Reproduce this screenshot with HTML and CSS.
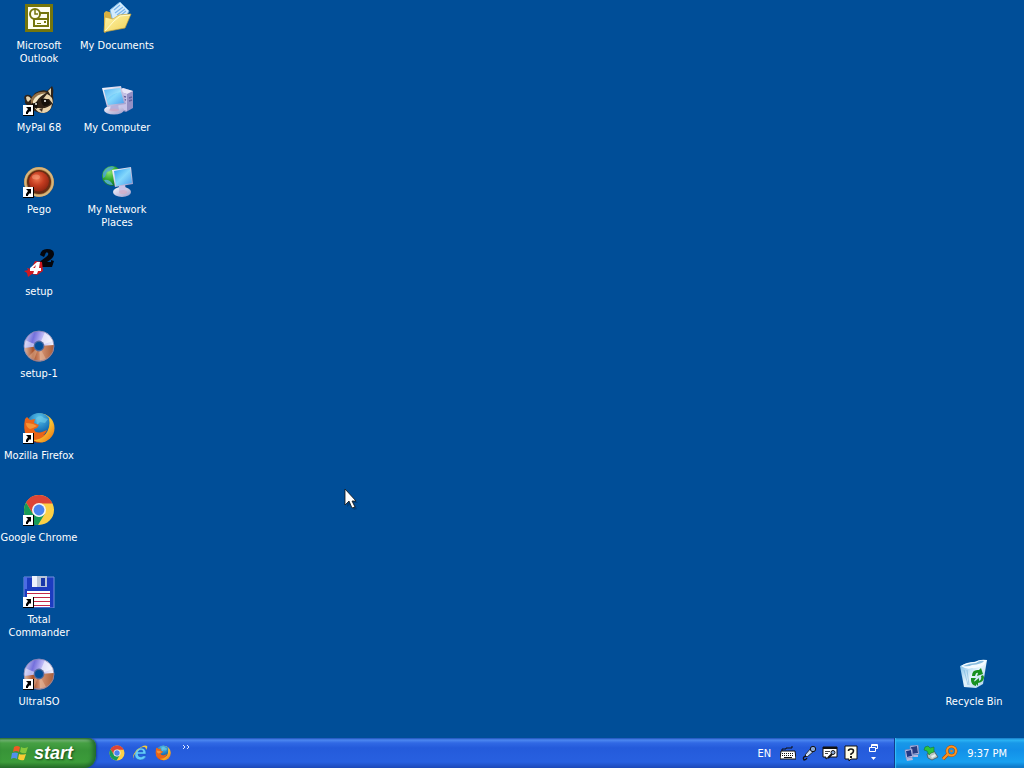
FILE: index.html
```html
<!DOCTYPE html>
<html lang="en">
<head>
<meta charset="utf-8">
<title>Desktop</title>
<link rel="stylesheet" href="styles.css">
</head>
<body>
<svg class="defs" width="0" height="0" aria-hidden="true">
  <defs>
    <linearGradient id="discTop" x1="0" y1="0" x2="1" y2="0.3"><stop offset="0" stop-color="#d8dcf4"/><stop offset=".35" stop-color="#7470dc"/><stop offset=".6" stop-color="#b9b4f4"/><stop offset="1" stop-color="#eef0fc"/></linearGradient>
    <linearGradient id="discLow" x1="0" y1="0" x2="1" y2="0"><stop offset="0" stop-color="#e2c0ac"/><stop offset=".3" stop-color="#a8532c"/><stop offset=".55" stop-color="#d69474"/><stop offset="1" stop-color="#a65c38"/></linearGradient>
    <linearGradient id="screen" x1="0" y1="0" x2="1" y2="1"><stop offset="0" stop-color="#2c9cf0"/><stop offset=".5" stop-color="#84d8fc"/><stop offset="1" stop-color="#4a9cec"/></linearGradient>
    <linearGradient id="plastic" x1="0" y1="0" x2="1" y2="1"><stop offset="0" stop-color="#fafaff"/><stop offset="1" stop-color="#9c98c8"/></linearGradient>
    <linearGradient id="folder" x1="0" y1="0" x2="1" y2="1"><stop offset="0" stop-color="#fff6a8"/><stop offset="1" stop-color="#f0d058"/></linearGradient>
    <radialGradient id="redBall" cx=".4" cy=".35" r=".7"><stop offset="0" stop-color="#f07850"/><stop offset=".5" stop-color="#c43c20"/><stop offset="1" stop-color="#8c2410"/></radialGradient>
    <radialGradient id="globe" cx=".35" cy=".3" r=".8"><stop offset="0" stop-color="#90e870"/><stop offset=".5" stop-color="#30a830"/><stop offset="1" stop-color="#0c6030"/></radialGradient>
    <linearGradient id="foxTail" x1="0" y1="0" x2="1" y2="1"><stop offset="0" stop-color="#f8e860"/><stop offset=".55" stop-color="#fbc030"/><stop offset="1" stop-color="#e86c10"/></linearGradient>
    <radialGradient id="foxGlobe" cx=".5" cy=".2" r=".8"><stop offset="0" stop-color="#58c4ec"/><stop offset=".6" stop-color="#1c78bc"/><stop offset="1" stop-color="#123c80"/></radialGradient>
    <linearGradient id="bin" x1="0" y1="0" x2="1" y2="1"><stop offset="0" stop-color="#6cb4e4"/><stop offset=".5" stop-color="#e4f4fc"/><stop offset="1" stop-color="#a8cce8"/></linearGradient>

    <symbol id="arrow" viewBox="0 0 11 11">
      <path d="M0 0h11v11H0z" fill="#000"/><path d="M0 0h10v10H0z" fill="#fff"/>
      <path d="M3 2h5v5L7 6 5 8v1H3V7l2-3z" fill="#000"/>
    </symbol>
    <symbol id="disc" viewBox="0 0 32 32">
      <circle cx="16" cy="16" r="15" fill="url(#discTop)"/>
      <path d="M1 18L16 16l15-1A15 15 0 0 1 1 18z" fill="url(#discLow)"/>
      <path d="M16 16L5 27a15 15 0 0 0 6 3z" fill="#e4b494" opacity=".5"/>
      <path d="M16 16L17 31a15 15 0 0 0 6-2z" fill="#eac0a4" opacity=".5"/>
      <path d="M16 16L22 2a15 15 0 0 1 8 9z" fill="#fff" opacity=".55"/>
      <path d="M16 16L2 10Q1 13 1 18z" fill="#fff" opacity=".5"/>
      <circle cx="16" cy="16" r="15" fill="none" stroke="#8c88b0" stroke-width=".8"/>
      <circle cx="16" cy="16" r="5.4" fill="#50699c"/><circle cx="16" cy="16" r="4" fill="#004e98"/>
    </symbol>
    <symbol id="chrome" viewBox="0 0 32 32">
      <circle cx="16" cy="16" r="15" fill="#fcd046"/>
      <path d="M3 8.5A15 15 0 0 1 29.5 9.5H16L9.7 19.5z" fill="#dc4437"/>
      <path d="M3 8.5A15 15 0 0 0 15 31L22 19.5 16 23 9.7 19.5z" fill="#169b58"/>
      <circle cx="16" cy="16" r="7" fill="#f4f4f4"/><circle cx="16" cy="16" r="5.4" fill="#4a84ee"/>
    </symbol>
    <symbol id="firefox" viewBox="0 0 32 32">
      <circle cx="17" cy="16" r="14.5" fill="url(#foxTail)"/>
      <circle cx="16" cy="13.5" r="12.5" fill="url(#foxGlobe)"/>
      <path d="M13 6q5-4 8 0l4 1-3 4-5-1-3 3z" fill="#70cce8" opacity=".6"/>
      <path d="M2 7l2-2 3 3 5-1-1 4 5 2-2 3-3 1q1 5 8 3l5-2q-2 5-6 6l10-4q-4 9-14 9-8 0-11-6Q0 17 2 7z" fill="#ea6418"/>
      <path d="M3 11q3 0 7 1l4 2-4 2-3 1q-4-2-4-6z" fill="#f69436"/>
      <path d="M26 6q6 6 4 13-2 8-9 11-7 1-12-2 9 0 13-5 6-7 4-17z" fill="url(#foxTail)"/>
      <path d="M4 23q6 8 15 7-9 3-15-7z" fill="#b83008"/>
    </symbol>
    <symbol id="monitor" viewBox="0 0 26 29">
      <ellipse cx="13" cy="24" rx="10" ry="4.5" fill="url(#plastic)"/>
      <path d="M10 17h7l1 7q-5 2-9 0z" fill="#b4b0dc"/>
      <path d="M1 2l19-2 5 18-19 3z" fill="url(#plastic)"/>
      <path d="M3 4l16-2 4 15-16 2z" fill="url(#screen)"/>
      <path d="M3 4l16-2 1 4Q11 7 6 14z" fill="#d8f6ff" opacity=".25"/>
      <ellipse cx="13" cy="24" rx="5" ry="1.6" fill="#d8a4b8" opacity=".55"/>
    </symbol>
    <symbol id="monitorRight" viewBox="0 0 22 31">
      <ellipse cx="11" cy="26" rx="9" ry="5" fill="url(#plastic)"/>
      <path d="M8 18h6l1 8q-4 2-7 0z" fill="#c8c4e8"/>
      <path d="M1 4L20 1l2 17-18 3z" fill="url(#plastic)"/>
      <path d="M3 5l16-3 2 15-16 3z" fill="url(#screen)"/>
      <ellipse cx="12" cy="26" rx="4" ry="2" fill="#d8a4b8" opacity=".55"/>
    </symbol>
  </defs>
</svg>

<main class="desktop">
  <button class="shortcut">
    <svg class="icon" viewBox="0 0 32 32"><path d="M2 2h28v28H2z" fill="#75760c"/><path d="M5 5h22v22H5z" fill="#fffff0"/><path d="M15 11h10v13H11v-5" fill="none" stroke="#75760c" stroke-width="2"/><circle cx="12" cy="12" r="5" fill="#fffff0" stroke="#75760c" stroke-width="2"/><path d="M12 8v4h3" fill="none" stroke="#75760c" stroke-width="1.500"/><path d="M11 17h14v7H11z" fill="#fffff0" stroke="#75760c" stroke-width="2"/><path d="M21 19h2v2h-2zM14 21h4v1h-4z" fill="#75760c"/></svg>
    <span class="label">Microsoft Outlook</span>
  </button>
  <button class="shortcut">
    <svg class="icon" viewBox="0 0 32 32"><path d="M3 11l2-2 7 2 2 9-10 11-1-1z" fill="#d8b040"/><path d="M9 8L19 0l9 9-7 13-9-2z" fill="#d4ebfc" stroke="#78b4e0"/><path d="M13 8l6-5M14 11l8-6M16 13l8-6M18 15l7-6" stroke="#78b4ec" stroke-width="1.200"/><path d="M3 30l1-15 8 2 6-4 12-1-6 14z" fill="url(#folder)" stroke="#c8a43c" stroke-width=".7"/><path d="M4 29l9-10 6-5 10-1" fill="none" stroke="#fffbd0"/></svg>
    <span class="label">My Documents</span>
  </button>
  <button class="shortcut">
    <svg class="icon" viewBox="0 0 32 32"><path d="M2 16Q0 13 3 11q4-1 6 2l3-4q7-4 12-2l5-5q2 3 1 9 1 8-1 12-3 6-9 6-10 0-13-8-6 1-5-5z" fill="#302318"/><path d="M3 13q3-2 5 2l-3 3q-2-2-2-5zM25 7l3-3v8z" fill="#e4d4b0"/><path d="M11 11q5-4 13-3l-8 4-5 6-3 2q-1-6 3-9z" fill="#92714a"/><path d="M10 17q3-7 13-8-7 4-9 8l-4 5z" fill="#f2e4c2"/><path d="M24 10q6 2 6 10l-4-5-6 0zM17 24q7 1 12-4-1 8-8 9-7 0-9-5z" fill="#ead5ae"/><path d="M18 15q5-2 9 3 0 4-6 4-3-2-3-7zM8 20l7-2-1 7z" fill="#15100b"/><circle cx="22" cy="17" r="1" fill="#fff"/><circle cx="13" cy="20" r="1" fill="#eee"/><path d="M16 25l4-1-1 4z" fill="#403025"/><use href="#arrow" y="21" width="11" height="11"/></svg>
    <span class="label">MyPal 68</span>
  </button>
  <button class="shortcut">
    <svg class="icon" viewBox="0 0 32 32"><path d="M17 7l5-3 10 3v17l-7 4-8-3z" fill="#9490c4"/><path d="M17 7l5-3 10 3-6 3z" fill="#e8e6f8"/><path d="M17 7l9 3v17l-9-3z" fill="#c8c4e8"/><path d="M20 12l5 1M20 15l5 1M28 14l3-1M28 17l3-1" stroke="#64609c" stroke-width="1.500"/><use href="#monitor" x="0" y="2" width="26" height="29"/></svg>
    <span class="label">My Computer</span>
  </button>
  <button class="shortcut">
    <svg class="icon" viewBox="0 0 32 32"><circle cx="16" cy="16" r="15" fill="#b08848"/><circle cx="16" cy="16" r="13.700" fill="none" stroke="#d8b47c" stroke-width="2"/><circle cx="16" cy="16" r="12" fill="#682c14"/><circle cx="16" cy="15.500" r="10" fill="url(#redBall)"/><ellipse cx="13" cy="11" rx="4" ry="2.500" fill="#ffb08c" opacity=".45"/><use href="#arrow" y="21" width="11" height="11"/></svg>
    <span class="label">Pego</span>
  </button>
  <button class="shortcut">
    <svg class="icon" viewBox="0 0 32 32"><circle cx="11" cy="10" r="10" fill="url(#globe)"/><path d="M2 7q5-8 12-6l-5 4-3 1-2 5-2 1z" fill="#4ca0e8" opacity=".75"/><path d="M3 14q6-1 9 5-7 0-9-5z" fill="#5cb0e8" opacity=".8"/><use href="#monitorRight" x="10" y="0" width="22" height="31"/></svg>
    <span class="label">My Network Places</span>
  </button>
  <button class="shortcut">
    <svg class="icon" viewBox="0 0 32 32"><path d="M17 7q1-6 7-6 7 0 7 5 0 4-7 8h4v-2l3 1-2 6H15v-4l8-6q3-2 2-4-2-2-3 2l-1 2z" fill="#05060c"/><path d="M4 20l4 1 4-8 7 1 1 9-6 4-5-1-4 3-1-4-3-2 4-1z" fill="#d01820"/><path d="M14 14h3l-1 6h2v3h-3l-1 3h-4l1-3H7v-3zM13 17l-3 3h2z" fill="#fff" fill-rule="evenodd"/></svg>
    <span class="label">setup</span>
  </button>
  <button class="shortcut">
    <svg class="icon" viewBox="0 0 32 32"><use href="#disc" width="32" height="32"/></svg>
    <span class="label">setup-1</span>
  </button>
  <button class="shortcut">
    <svg class="icon" viewBox="0 0 32 32"><use href="#firefox" width="32" height="32"/><use href="#arrow" y="21" width="11" height="11"/></svg>
    <span class="label">Mozilla Firefox</span>
  </button>
  <button class="shortcut">
    <svg class="icon" viewBox="0 0 32 32"><use href="#chrome" width="32" height="32"/><use href="#arrow" y="21" width="11" height="11"/></svg>
    <span class="label">Google Chrome</span>
  </button>
  <button class="shortcut">
    <svg class="icon" viewBox="0 0 32 32"><path d="M1 1h30v31H2l-1-2z" fill="#1c3cc0" stroke="#7490dc"/><path d="M1 1h3v12H1z" fill="#4c6ce4"/><path d="M9 0h15v11H9z" fill="#b8c4d8"/><path d="M9 0h5v11H9z" fill="#eef2fc"/><path d="M18 2h4v8h-4z" fill="#1838a8"/><path d="M4 15h23v16H4z" fill="#fff"/><path d="M4 17h23v1H4zM4 21h23v1H4zM4 25h23v1H4zM4 29h23v1H4z" fill="#c42848"/><use href="#arrow" y="21" width="11" height="11"/></svg>
    <span class="label">Total Commander</span>
  </button>
  <button class="shortcut">
    <svg class="icon" viewBox="0 0 32 32"><use href="#disc" width="32" height="32"/><use href="#arrow" y="21" width="11" height="11"/></svg>
    <span class="label">UltraISO</span>
  </button>
  <button class="shortcut recycle">
    <svg class="icon" viewBox="0 0 32 32"><path d="M2 8q7-3 13-4l14-2-4 24-7 4-12-1z" fill="url(#bin)"/><path d="M3 8q5-4 14-4 4-3 12-2l-3 5q-6 4-12 3-5 2-11-2z" fill="#f4fbff"/><path d="M5 8q7-3 13-3 4-3 8-2-2 3-12 4-3 2-9 1z" fill="#88bcdf"/><path d="M6 12l4 15M9 12l2 15" stroke="#69add8" opacity=".5"/><g fill="#189020"><path d="M14 18q0-7 7-6l2-2 2 6-6 2 1-3q-2-1-3 3z"/><path d="M25 17l1 2q0 5-6 6v3l-4-4 5-4v3q3-1 2-5z"/><path d="M13 20l5 0-2 3 2 2v3q-5-1-5-6z"/></g></svg>
    <span class="label">Recycle Bin</span>
  </button>
</main>

<footer class="taskbar">
  <button class="start">
    <svg class="flag" viewBox="0 0 18 18"><path d="M3 3q3-2 6 0L8 8Q5 6 2 8z" fill="#ee5a24"/><path d="M10 3q3 2 7 0l-2 6q-3 1-6-1z" fill="#84c83c"/><path d="M1 9q3-1 6 0l-1 6q-3-2-6 0z" fill="#5090ec"/><path d="M8 10q3 1 7 0l-2 6q-3 1-6-1z" fill="#f8cc34"/></svg>
    <span>start</span>
  </button>
  <nav class="quick" aria-label="Quick launch">
    <button class="tool" aria-label="Google Chrome"><svg viewBox="0 0 32 32"><use href="#chrome" width="32" height="32"/></svg></button>
    <button class="tool" aria-label="Internet Explorer"><svg viewBox="0 0 16 16"><path d="M14 11q-1 4-6 4-6-1-5-7 1-5 6-5 5 0 5 6H6q0 3 3 3 1 0 2-1zM6 7h5q0-2-2-2T6 7z" fill="#64ccfc" stroke="#1458b0" stroke-width=".4" fill-rule="evenodd"/><path d="M2 15Q-1 11 5 5q7-6 10-4 1 1-1 4 0-3-2-3-4 0-8 5-4 6-2 8z" fill="#f4cc38"/></svg></button>
    <button class="tool" aria-label="Mozilla Firefox"><svg viewBox="0 0 32 32"><use href="#firefox" width="32" height="32"/></svg></button>
    <button class="more" aria-label="More programs"><svg viewBox="0 0 8 7"><path d="M1 1l2 2-2 2M5 1l2 2-2 2" fill="none" stroke="#dceaff"/></svg></button>
  </nav>
  <div class="language">
    <button class="lang">EN</button>
    <button class="tool" aria-label="Keyboard"><svg viewBox="0 0 16 16"><path d="M2 6V4h4V3h6V1" fill="none" stroke="#111"/><path d="M1 6h14l1 8H0z" fill="#fff" stroke="#111"/><path d="M2 8.500h12M2 10.500h12" stroke="#111" stroke-dasharray="1 1"/><path d="M4 12.500h8" stroke="#111"/></svg></button>
    <button class="tool" aria-label="Microphone"><svg viewBox="0 0 16 16"><path d="M4 10l6-7 3 3-7 6z" fill="#c8dcf4" stroke="#111" stroke-width=".8"/><circle cx="12" cy="4" r="2.700" fill="#88a8d8" stroke="#111"/><path d="M5 11q-4 1-2 4 2 0 3-2" fill="none" stroke="#111" stroke-width="1.300"/></svg></button>
    <button class="tool" aria-label="Writing tools"><svg viewBox="0 0 16 16"><path d="M1 2h14v10H7l-3 2v-2H1z" fill="#fff" stroke="#111"/><path d="M1 2h14v2H1z" fill="#111"/><path d="M3 6.500h5M3 8.500h3" stroke="#444"/><path d="M6 13l4-4" stroke="#111" stroke-width="2"/><circle cx="11" cy="7.500" r="2" fill="#8caad8" stroke="#111"/></svg></button>
    <button class="tool" aria-label="Help"><svg viewBox="0 0 16 16"><path d="M2 1h12v13H8l-2 2v-2H2z" fill="#fffde8" stroke="#111"/><path d="M5.500 6q0-2 2.500-2t2.500 2-2.500 3v1" fill="none" stroke="#111" stroke-width="1.600"/><path d="M7 11h2v2H7z" fill="#111"/></svg></button>
    <div class="langmenu">
      <button aria-label="Restore"><svg viewBox="0 0 9 8"><path d="M2.500 3.500v-3h6v4h-2M.500 3.500h6v4h-6zM2.500 1.500h6" fill="none" stroke="#fff"/></svg></button>
      <button aria-label="Options"><svg viewBox="0 0 9 8"><path d="M2 3h5L4.500 6z" fill="#fff"/></svg></button>
    </div>
  </div>
  <div class="tray">
    <button class="tool" aria-label="Network connection"><svg viewBox="0 0 16 16"><path d="M6 1l8-1 1 9-8 1z" fill="#c8d0f0" stroke="#7880b8" stroke-width=".7"/><path d="M7 2l6-1 1 7-6 1z" fill="#283c80"/><path d="M9 10h5v2H9zM2 13l6-1 1 3-6 1z" fill="#b4b8dc"/><path d="M1 5l7-1 1 8-7 1z" fill="#d8def8" stroke="#7880b8" stroke-width=".7"/><path d="M2 6l5-1 1 6-5 1z" fill="#203884"/></svg></button>
    <button class="tool" aria-label="Safely remove hardware"><svg viewBox="0 0 16 16"><path d="M4 9l7-3 4 6-6 3-4-2z" fill="#b8c4c0" stroke="#46555c" stroke-width=".8"/><path d="M8 11l4-2 1 2-4 2z" fill="#e8f0f0"/><path d="M2 2l3-1 2 2 4-1v5l-3 1-2 2-2-4-3-1z" fill="#2cc43c" stroke="#177438" stroke-width=".6"/></svg></button>
    <button class="tool" aria-label="Search"><svg viewBox="0 0 16 16"><circle cx="9.500" cy="6" r="4.500" fill="none" stroke="#a64c08" stroke-width="3"/><path d="M6 9l-5 5" stroke="#a64c08" stroke-width="3.500"/><circle cx="9.500" cy="6" r="4.500" fill="none" stroke="#fc9420" stroke-width="2"/><path d="M6 9l-5 5" stroke="#fc9420" stroke-width="2.300"/><circle cx="9.500" cy="6" r="1.300" fill="#e87c14"/></svg></button>
    <time class="clock">9:37 PM</time>
  </div>
</footer>

<svg class="pointer" viewBox="0 0 14 22" aria-hidden="true"><path d="M3 4v15l4-3 3 6 3-1-3-6h4z" fill="#003468" opacity=".6"/><path d="M1 1v16l4-4 3 7 3-1-3-6h4z" fill="#fff" stroke="#111" stroke-width=".8"/></svg>
</body>
</html>
```
FILE: styles.css
```css
* { box-sizing: border-box; }

body {
  margin: 0;
  min-height: 100vh;
  display: grid;
  grid-template-rows: 1fr auto;
  background: #004e98;
  color: #fff;
  font: 11px/13px Tahoma, "DejaVu Sans Condensed", sans-serif;
  overflow: hidden;
}

button {
  padding: 0;
  border: 0;
  background: none;
  color: inherit;
  font: inherit;
}

svg { display: block; }

.defs { position: absolute; }

.desktop {
  display: grid;
  grid-template-columns: 78px 78px 1fr 100px;
  grid-template-rows: repeat(9, 82px);
}

.shortcut {
  grid-column: 1;
  display: flex;
  flex-direction: column;
  align-items: center;
  gap: 5px;
  padding-top: 2px;
}

/* The system folders fill the second column from the top. */
.shortcut:nth-child(-n+6):nth-child(even) { grid-column: 2; }

.recycle { grid-column: 4; grid-row: 9; }

.icon { width: 32px; height: 32px; }

.label { text-align: center; }

.taskbar {
  display: flex;
  height: 30px;
  background: linear-gradient(#1c50b8 0, #4c88f0 2px, #3068e4 5px, #245bdb 10px, #2860e0 24px, #1c48b8 30px);
}

.start {
  display: flex;
  align-items: center;
  gap: 5px;
  width: 96px;
  padding-left: 11px;
  border-radius: 0 8px 12px 0;
  background: linear-gradient(#307430 0, #78b878 2px, #46a044 5px, #389438 12px, #3c9c3a 24px, #287028 30px);
  box-shadow: inset -3px 0 4px #20682c, 1px 0 2px #1840a0;
  font: italic bold 18px/20px "Liberation Sans", Arial, sans-serif;
  text-shadow: 1px 1px 2px #184818;
}

.flag { width: 18px; height: 18px; }

.quick {
  display: flex;
  align-items: center;
  gap: 7px;
  padding-left: 13px;
}

.tool svg { width: 16px; height: 16px; }

.more {
  align-self: start;
  padding: 6px 0 0 4px;
}

.more svg { width: 8px; height: 7px; }

.language {
  display: flex;
  align-items: center;
  gap: 5px;
  margin-left: auto;
  padding-right: 16px;
}

.lang { padding-right: 4px; }

.langmenu {
  display: grid;
  gap: 2px;
  padding-left: 5px;
}

.langmenu svg { width: 9px; height: 8px; }

.tray {
  display: flex;
  align-items: center;
  gap: 3px;
  padding: 0 17px 0 9px;
  border-left: 1px solid #123c8c;
  background: linear-gradient(#1470c0 0, #2cb4f4 2px, #1898e8 5px, #1290e8 12px, #18a0f0 24px, #0c70c0 30px);
  box-shadow: inset 1px 0 1px #38c0f8;
}

.clock { padding-left: 6px; }

.pointer {
  position: absolute;
  left: 344px;
  top: 488px;
  width: 14px;
  height: 22px;
}
```
